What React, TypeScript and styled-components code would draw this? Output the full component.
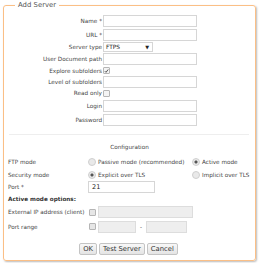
import React from 'react';
import styled, { createGlobalStyle } from 'styled-components';

const GlobalStyle = createGlobalStyle`
	body {
		margin: 0;
		background: #fff;
		font-family: "DejaVu Sans", Verdana, sans-serif;
		font-size: 5.7px;
		color: #444;
	}
`;

const Fieldset = styled.fieldset`
	margin: 2px 4px 2px 3px;
	padding: 4px 4px 8px 4px;
	border: 1px solid #fbbf86;
	border-radius: 3px;
	box-shadow: 1px 1px 2px #bbb;
	height: 259px;
	box-sizing: border-box;
`;

const Legend = styled.legend`
	margin-left: 7px;
	padding: 0 3px;
	font-size: 6.9px;
	color: #555;
	line-height: 1;
`;

const TopForm = styled.div`
	display: flex;
	flex-direction: column;
	margin-top: 1px;
`;

const Row = styled.div<{ $h: number }>`
	display: grid;
	grid-template-columns: 94px 1fr;
	column-gap: 1px;
	align-items: center;
	height: ${p => p.$h}px;
`;

const Label = styled.span`
	text-align: right;
	white-space: nowrap;
`;

const TextBox = styled.div<{ $w: number; $disabled?: boolean }>`
	width: ${p => p.$w}px;
	height: 12px;
	flex: none;
	box-sizing: border-box;
	border: 1px solid ${p => (p.$disabled ? '#ddd' : '#d6d6d6')};
	background: ${p => (p.$disabled ? '#eeeeee' : '#fff')};
	font-size: 6.5px;
	color: #222;
	padding-left: 3px;
	line-height: 10px;
`;

const Select = styled.div`
	width: 50px;
	height: 10px;
	box-sizing: border-box;
	border: 1px solid #d6d6d6;
	display: flex;
	align-items: center;
	justify-content: space-between;
	padding: 0 3px 0 2px;
	font-size: 5.8px;
	color: #222;
`;

const Arrow = styled.span`
	font-size: 5px;
`;

const Box = styled.span<{ $disabled?: boolean }>`
	display: inline-flex;
	align-items: center;
	justify-content: center;
	width: 7px;
	height: 7px;
	flex: none;
	box-sizing: border-box;
	border: 1px solid #b5b5b5;
	border-radius: 1px;
	background: ${p => (p.$disabled ? '#e6e6e6' : '#f4f4f4')};
`;

const Separator = styled.hr`
	border: 0;
	border-top: 1px solid #eee;
	margin: 7px 2px 0 1px;
`;

const Heading = styled.div`
	text-align: center;
	margin-top: 7px;
	height: 10px;
	line-height: 10px;
`;

const ConfRow = styled.div<{ $h: number }>`
	display: grid;
	grid-template-columns: 80px 104px 1fr;
	align-items: center;
	height: ${p => p.$h}px;
	white-space: nowrap;
`;

const RadioItem = styled.span`
	display: inline-flex;
	align-items: center;
	gap: 2px;
`;

const Radio = styled.span<{ $on?: boolean }>`
	width: 8px;
	height: 8px;
	flex: none;
	border-radius: 50%;
	box-sizing: border-box;
	border: 1px solid #cfcfcf;
	background: ${p => (p.$on ? 'radial-gradient(circle, #555 0 1.3px, #e9e9e9 1.8px)' : '#e9e9e9')};
`;

const Bold = styled.div`
	font-weight: bold;
	color: #333;
	height: 11px;
	line-height: 11px;
`;

const Field = styled.span`
	display: inline-flex;
	align-items: center;
	gap: 2px;
	padding-left: 1px;
`;

const Dash = styled.span`
	padding: 0 2px;
`;

const Buttons = styled.div`
	display: flex;
	justify-content: center;
	gap: 2px;
	margin-top: 9px;
	padding-right: 2px;
`;

const Button = styled.button`
	font-family: "DejaVu Sans", Verdana, sans-serif;
	font-size: 6.8px;
	color: #333;
	height: 12px;
	padding: 0 3px;
	border: 1px solid #c4c4c4;
	border-radius: 2px;
	background: linear-gradient(#f8f8f8, #e4e4e4);
	line-height: 10px;
`;

const Check = () => (
	<svg width="6" height="6" viewBox="0 0 6 6">
		<path d="M1 3.2 L2.4 4.6 L5 1.2" stroke="#333" strokeWidth="1" fill="none" />
	</svg>
);

const App: React.FC = () => (
	<>
		<GlobalStyle />
		<Fieldset>
			<Legend>Add Server</Legend>
			<TopForm>
				<Row $h={14}><Label>Name *</Label><TextBox $w={94} /></Row>
				<Row $h={14}><Label>URL *</Label><TextBox $w={94} /></Row>
				<Row $h={11}>
					<Label>Server type</Label>
					<Select><span>FTPS</span><Arrow>▼</Arrow></Select>
				</Row>
				<Row $h={13}><Label>User Document path</Label><TextBox $w={94} /></Row>
				<Row $h={10}><Label>Explore subfolders</Label><Box><Check /></Box></Row>
				<Row $h={12}><Label>Level of subfolders</Label><TextBox $w={94} /></Row>
				<Row $h={11}><Label>Read only</Label><Box /></Row>
				<Row $h={14}><Label>Login</Label><TextBox $w={94} /></Row>
				<Row $h={14}><Label>Password</Label><TextBox $w={94} /></Row>
			</TopForm>
			<Separator />
			<Heading>Configuration</Heading>
			<ConfRow $h={13} style={{ marginTop: 4 }}>
				<span>FTP mode</span>
				<RadioItem><Radio />Passive mode (recommended)</RadioItem>
				<RadioItem><Radio $on />Active mode</RadioItem>
			</ConfRow>
			<ConfRow $h={12}>
				<span>Security mode</span>
				<RadioItem><Radio $on />Explicit over TLS</RadioItem>
				<RadioItem><Radio />Implicit over TLS</RadioItem>
			</ConfRow>
			<ConfRow $h={13}>
				<span>Port *</span>
				<TextBox $w={67}>21</TextBox>
			</ConfRow>
			<Bold>Active mode options:</Bold>
			<ConfRow $h={15}>
				<span>External IP address (client)</span>
				<Field><Box $disabled /><TextBox $w={95} $disabled /></Field>
			</ConfRow>
			<ConfRow $h={14}>
				<span>Port range</span>
				<Field>
					<Box $disabled />
					<TextBox $w={38} $disabled />
					<Dash>-</Dash>
					<TextBox $w={41} $disabled />
				</Field>
			</ConfRow>
			<Buttons>
				<Button>OK</Button>
				<Button>Test Server</Button>
				<Button>Cancel</Button>
			</Buttons>
		</Fieldset>
	</>
);

export default App;
